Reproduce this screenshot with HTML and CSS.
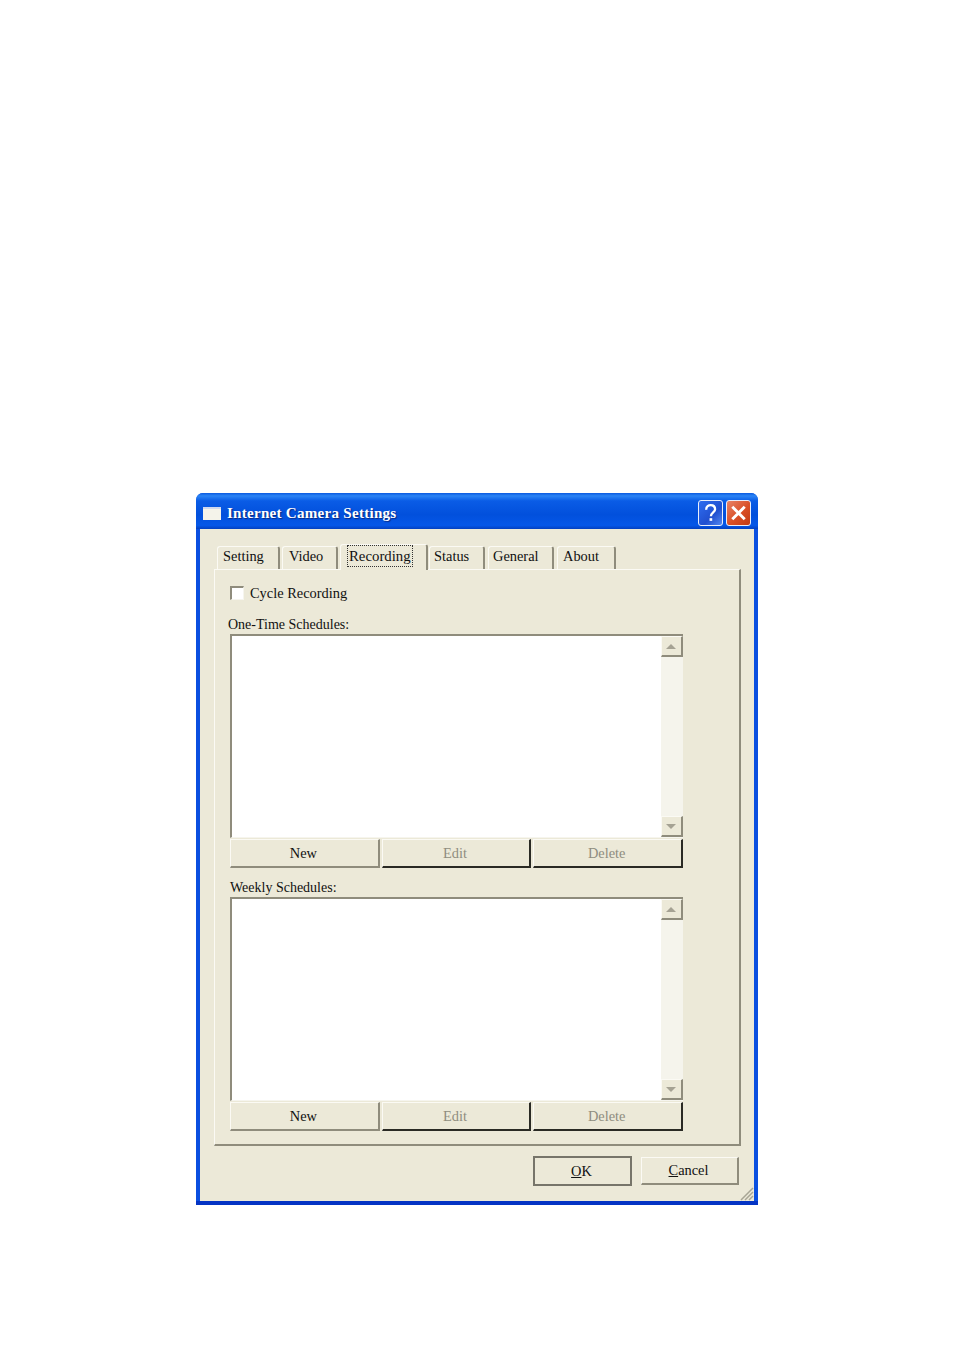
FILE: index.html
```html
<!DOCTYPE html>
<html lang="en">
<head>
    <meta charset="UTF-8">
    <title>Internet Camera Settings</title>
    <link rel="stylesheet" href="styles.css">
</head>

<body>
    <div class="window">
        <div class="titlebar">
            <span class="app-icon"></span>
            <span class="title">Internet Camera Settings</span>
            <span class="caption-btn help-btn">
                <svg width="24" height="24" viewBox="0 0 24 24"><path d="M7.5 8.5 C7.5 5 10 3.8 12.2 3.8 C15 3.8 16.8 5.6 16.8 8 C16.8 11.2 12.4 11.4 12.4 15.4" fill="none" stroke="#fff" stroke-width="2.4"/><rect x="11" y="17.4" width="2.8" height="2.8" fill="#fff"/></svg>
            </span>
            <span class="caption-btn close-btn">
                <svg width="24" height="24" viewBox="0 0 24 24"><path d="M5.5 5.5 L18.5 18.5 M18.5 5.5 L5.5 18.5" fill="none" stroke="#fff" stroke-width="3"/></svg>
            </span>
        </div>

        <div class="client">
            <div class="tabs">
                <div class="tab tab-setting">Setting</div>
                <div class="tab tab-video">Video</div>
                <div class="tab tab-recording active"><span class="focus">Recording</span></div>
                <div class="tab tab-status">Status</div>
                <div class="tab tab-general">General</div>
                <div class="tab tab-about">About</div>
            </div>

            <div class="panel">
                <div class="check-row">
                    <span class="checkbox"></span>
                    <span>Cycle Recording</span>
                </div>

                <div class="group-label first-label">One-Time Schedules:</div>
                <div class="listbox">
                    <div class="list-area"></div>
                    <div class="scrollbar">
                        <span class="scroll-btn"><span class="arrow-up"></span></span>
                        <span class="scroll-track"></span>
                        <span class="scroll-btn"><span class="arrow-down"></span></span>
                    </div>
                </div>
                <div class="btn-row">
                    <div class="btn">New</div>
                    <div class="btn disabled">Edit</div>
                    <div class="btn disabled">Delete</div>
                </div>

                <div class="group-label second-label">Weekly Schedules:</div>
                <div class="listbox">
                    <div class="list-area"></div>
                    <div class="scrollbar">
                        <span class="scroll-btn"><span class="arrow-up"></span></span>
                        <span class="scroll-track"></span>
                        <span class="scroll-btn"><span class="arrow-down"></span></span>
                    </div>
                </div>
                <div class="btn-row">
                    <div class="btn">New</div>
                    <div class="btn disabled">Edit</div>
                    <div class="btn disabled">Delete</div>
                </div>
            </div>

            <div class="footer">
                <div class="btn ok-btn"><span><u>O</u>K</span></div>
                <div class="btn cancel-btn"><span><u>C</u>ancel</span></div>
            </div>

            <svg class="grip" width="16" height="16" viewBox="0 0 16 16">
                <path d="M15 3 L3 15 M15 7 L7 15 M15 11 L11 15" stroke="#a8a595" stroke-width="1.5" fill="none"/>
            </svg>
        </div>
    </div>
</body>
</html>
```

FILE: styles.css
```css
body {
    margin: 0;
    padding: 493px 0 0 196px;
    background-color: #fff;
    font-family: "Liberation Serif", "Noto Sans CJK TC", serif;
    font-size: 14.4px;
    color: #111;
}

.window {
    width: 562px;
    height: 712px;
    box-sizing: border-box;
    display: flex;
    flex-direction: column;
    border-radius: 7px 7px 0 0;
    overflow: hidden;
    background: linear-gradient(to top, #0434c4 4px, #0a4fe0 4px);
}

.titlebar {
    height: 36px;
    flex: none;
    display: flex;
    align-items: center;
    padding: 0 7px 0 7px;
    background: linear-gradient(to bottom, #0a5ae0 0%, #2b84f5 8%, #0a5ce6 22%, #0250dc 60%, #0557e8 90%, #0340c0 100%);
}

.app-icon {
    width: 18px;
    height: 13px;
    margin-top: 4px;
    background-color: #f4f3ea;
    border-top: 2px solid #cfd8ee;
    box-sizing: border-box;
    margin-right: 6px;
}

.title {
    flex: 1;
    padding-top: 4px;
    color: #fff;
    font-weight: bold;
    font-size: 15.1px;
    letter-spacing: 0.25px;
    text-shadow: 1px 1px 1px #0a2a80;
}

.caption-btn {
    width: 25px;
    height: 26px;
    margin-top: 4px;
    box-sizing: border-box;
    border: 1px solid #e8eefa;
    border-radius: 3px;
    display: flex;
    align-items: center;
    justify-content: center;
}

.help-btn {
    background: linear-gradient(135deg, #2f6df0, #2150d0 60%, #5488f0);
    margin-right: 3px;
}

.close-btn {
    background: linear-gradient(135deg, #e88468, #d94f26 55%, #c23a14);
}

.client {
    flex: 1;
    position: relative;
    margin: 0 4px 4px;
    background-color: #ece9d8;
    padding: 14px 14px 0;
}

.tabs {
    display: flex;
    align-items: flex-end;
    height: 26px;
    padding-left: 3px;
}

.tab {
    height: 23px;
    box-sizing: border-box;
    padding: 1px 0 0 5px;
    border-top: 1px solid #fbfaf4;
    border-left: 1px solid #fbfaf4;
    border-right: 2px solid #8f8c7c;
    border-radius: 3px 3px 0 0;
    margin-right: 2px;
    white-space: nowrap;
}

.tab-setting { width: 63px; }
.tab-video { width: 56px; padding-left: 6px; }
.tab-status { width: 56px; padding-left: 4px; margin-left: -1px; margin-right: 3px; }
.tab-general { width: 66px; padding-left: 4px; margin-right: 3px; }
.tab-about { width: 59px; padding-left: 5px; }

.tab-recording {
    width: 88px;
    height: 26px;
    padding: 1px 0 0 7px;
    position: relative;
    z-index: 1;
    margin-bottom: -1px;
    background-color: #ece9d8;
}

.focus {
    display: inline-block;
    padding: 0 1px;
    font-size: 14.8px;
    line-height: 20px;
    outline: 1px dotted #333;
}

.panel {
    width: 527px;
    height: 577px;
    box-sizing: border-box;
    padding: 15px 57px 0 15px;
    border-top: 1px solid #fbfaf4;
    border-left: 1px solid #fbfaf4;
    border-right: 2px solid #8f8c7c;
    border-bottom: 2px solid #8f8c7c;
}

.check-row {
    display: flex;
    align-items: center;
    height: 16px;
    gap: 6px;
}

.checkbox {
    width: 14px;
    height: 14px;
    box-sizing: border-box;
    background-color: #fff;
    border-top: 2px solid #8f8c7c;
    border-left: 2px solid #8f8c7c;
    border-right: 1px solid #f6f5ee;
    border-bottom: 1px solid #f6f5ee;
}

.group-label {
    height: 17px;
    line-height: 16px;
    font-size: 14px;
    white-space: nowrap;
}

.first-label {
    margin: 16px 0 0 -2px;
    line-height: 15px;
}

.second-label {
    margin-top: 12px;
}

.listbox {
    display: flex;
    height: 204px;
    width: 453px;
    box-sizing: border-box;
    border-top: 2px solid #8f8c7c;
    border-left: 2px solid #8f8c7c;
    border-bottom: 1px solid #f6f5ee;
    background-color: #fff;
}

.list-area {
    flex: 1;
}

.scrollbar {
    width: 22px;
    display: flex;
    flex-direction: column;
    background-color: #f5f4ec;
}

.scroll-track {
    flex: 1;
}

.scroll-btn {
    height: 21px;
    box-sizing: border-box;
    display: flex;
    align-items: center;
    justify-content: center;
    padding-right: 2px;
    background-color: #ece9d8;
    border-top: 1px solid #fbfaf4;
    border-left: 1px solid #fbfaf4;
    border-right: 2px solid #8f8c7c;
    border-bottom: 2px solid #8f8c7c;
}

.arrow-up,
.arrow-down {
    width: 0;
    height: 0;
    border-left: 5px solid transparent;
    border-right: 5px solid transparent;
}

.arrow-up {
    border-bottom: 5px solid #a5a293;
}

.arrow-down {
    border-top: 5px solid #a5a293;
}

.btn-row {
    display: flex;
    gap: 2px;
    width: 453px;
    margin-top: 1px;
}

.btn {
    flex: 1;
    height: 29px;
    box-sizing: border-box;
    display: flex;
    align-items: center;
    justify-content: center;
    padding-right: 2px;
    background-color: #ece9d8;
    border-top: 1px solid #fbfaf4;
    border-left: 1px solid #fbfaf4;
    border-right: 2px solid #8f8c7c;
    border-bottom: 2px solid #8f8c7c;
}

.btn.disabled {
    color: #8f8d80;
    border-right-color: #2a2a24;
    border-bottom-color: #2a2a24;
}

.footer {
    display: flex;
    align-items: center;
    justify-content: flex-end;
    gap: 9px;
    width: 525px;
    margin-top: 10px;
}

.footer .btn {
    flex: none;
}

.ok-btn {
    width: 99px;
    height: 30px;
    border: 2px solid #77756a;
}

.cancel-btn {
    width: 98px;
    height: 28px;
}

.grip {
    position: absolute;
    right: 0;
    bottom: 0;
}
```
